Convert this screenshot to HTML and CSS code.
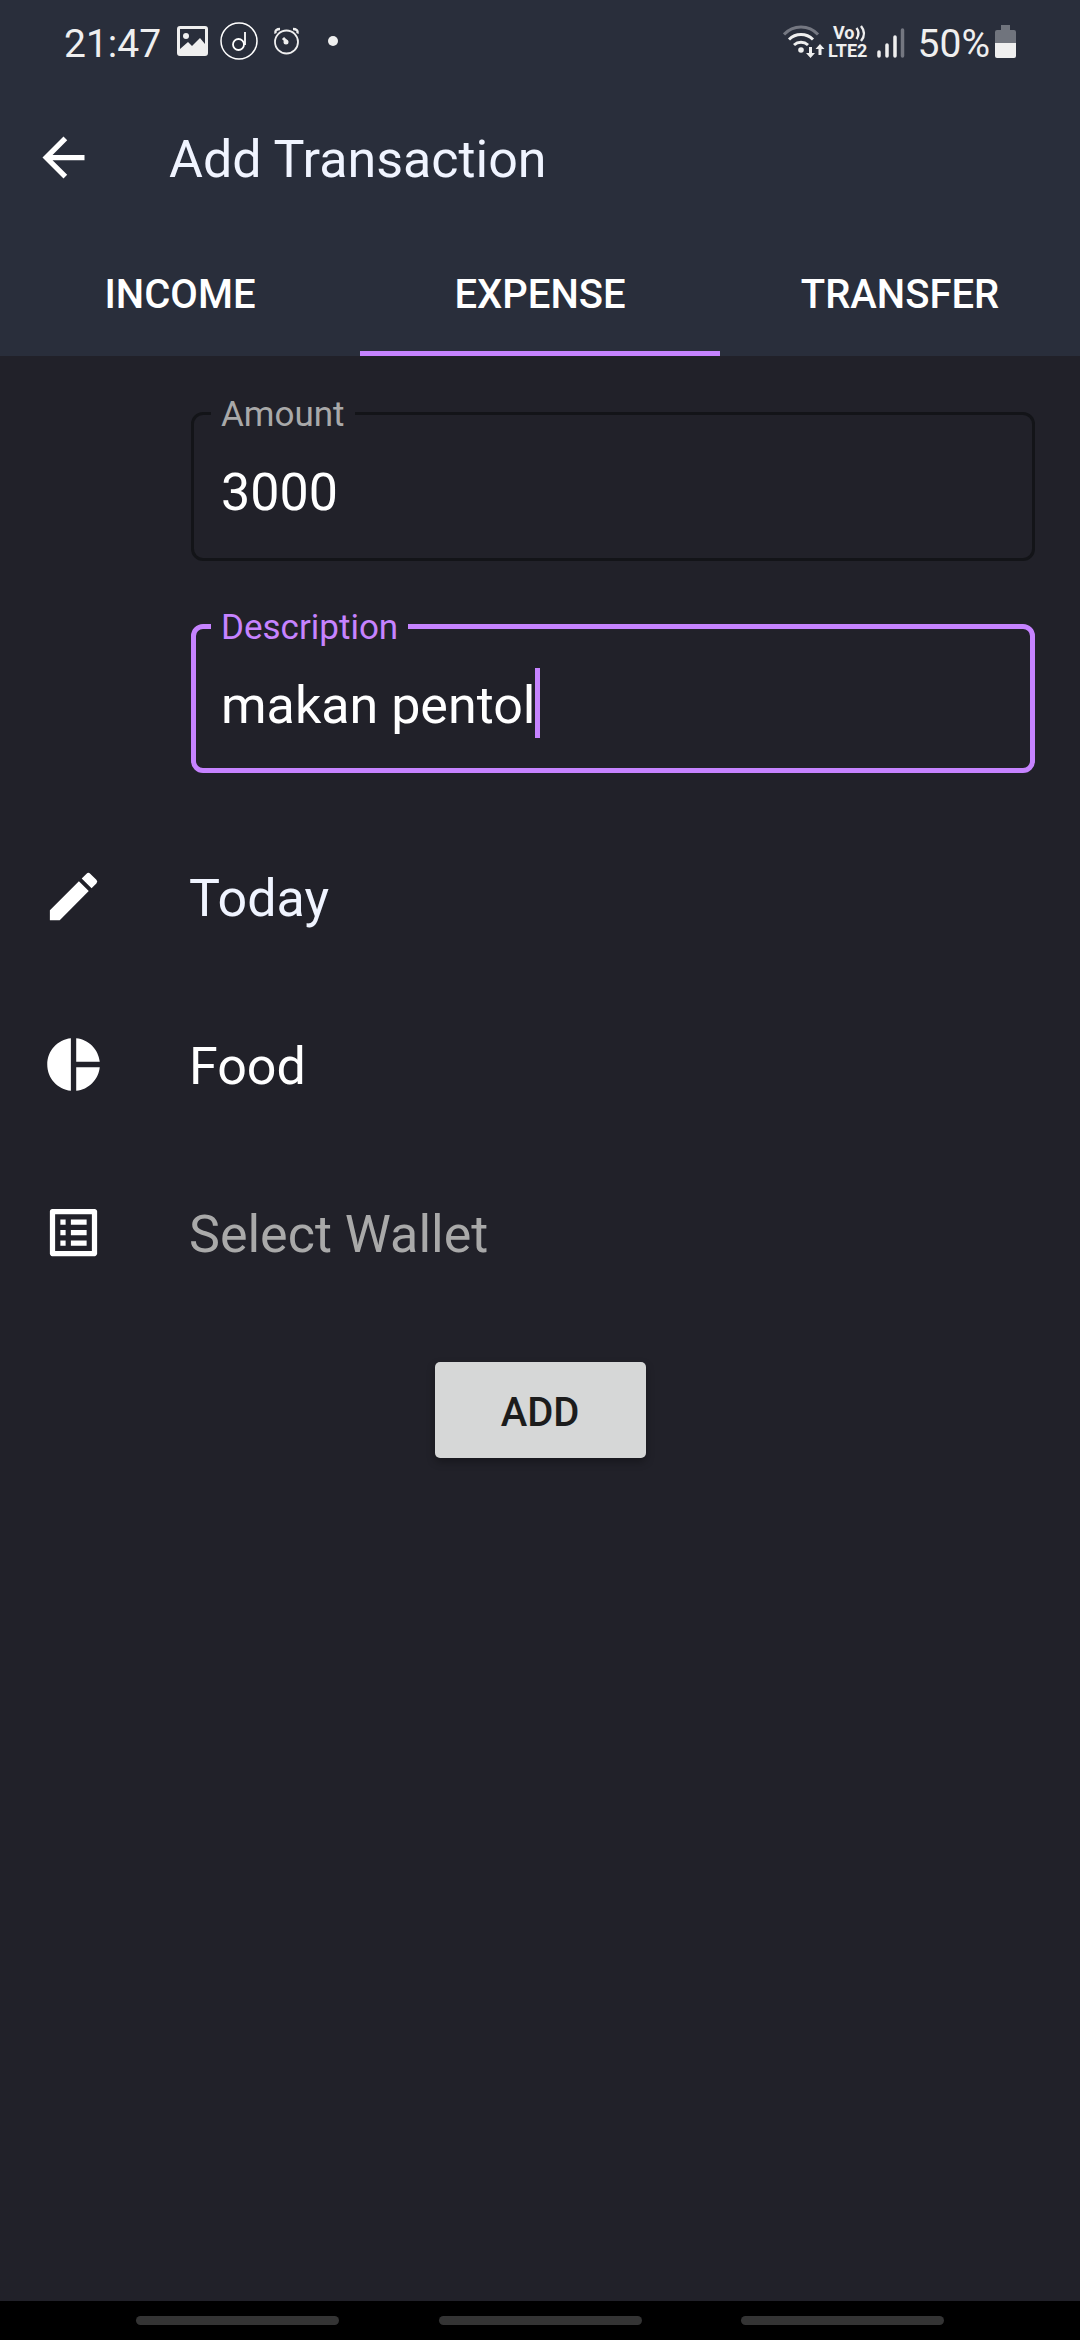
FILE: index.html
```html
<!DOCTYPE html>
<html lang="en">
<head>
<meta charset="utf-8">
<meta name="viewport" content="width=device-width, initial-scale=1">
<title>Add Transaction</title>
<link rel="stylesheet" href="styles.css">
</head>
<body>
<div class="screen">
  <header class="header">
    <div class="status-bar">
      <div class="status-group">
        <span class="status-text">21:47</span>
        <svg class="status-icons-left" width="164" height="42" viewBox="0 0 164 42" aria-hidden="true">
          <path fill="#efefef" fill-rule="evenodd" d="M3 5h25a3 3 0 0 1 3 3v24a3 3 0 0 1-3 3H3a3 3 0 0 1-3-3V8a3 3 0 0 1 3-3zM3 8v20l8-7 4 4 8-8 5 6V8z"/>
          <circle cx="9" cy="15" r="3" fill="#efefef"/>
          <g fill="none" stroke="#fff">
            <circle cx="62" cy="20" r="18" stroke-width="1.5"/>
            <circle cx="61.500" cy="23.500" r="5.500" stroke-width="1.8"/>
            <path d="M68 11v13" stroke-width="1.8"/>
          </g>
          <g fill="none" stroke="#efefef" stroke-width="1.800">
            <circle cx="109.500" cy="21" r="11.500"/>
            <path d="M98.500 12.500c-1-3 1.500-4.500 4.500-4.500M120.500 12.500c1-3-1.500-4.500-4.500-4.500" stroke-width="2.500"/>
            <path d="M106 17l3 3" stroke-width="3"/>
          </g>
          <circle cx="109" cy="21" r="2.500" fill="#efefef"/>
          <circle cx="156" cy="20" r="5" fill="#efefef"/>
        </svg>
      </div>
      <div class="status-group">
        <svg class="status-icons-right" width="122" height="42" viewBox="0 0 122 42" role="img" aria-label="Wi-Fi and mobile signal">
          <g fill="none" stroke-width="3">
            <path d="M1 13.500a23 23 0 0 1 34 0" stroke="#747781"/>
            <path d="M6 18.500a17 17 0 0 1 24 0M11 24a10.500 10.500 0 0 1 14 0" stroke="#efefef"/>
          </g>
          <circle cx="18" cy="29" r="2.800" fill="#efefef"/>
          <path fill="#efefef" d="M26 26h3v6h3l-4.500 5-4.500-5h3zM35.500 34h3v-6h3l-4.500-5-4.500 5h3z"/>
          <text class="network-label" x="50" y="18">Vo</text>
          <text class="network-label" x="45" y="36">LTE2</text>
          <path d="M73.500 7q4 5 0 11M78 5q6 7.500 0 15" fill="none" stroke="#efefef" stroke-width="2.400"/>
          <g stroke="#efefef" stroke-width="3.500" stroke-linecap="round">
            <path d="M96 31v4M104 24v11M112 16v19"/>
            <path d="M119.500 9v26" stroke="#747781"/>
          </g>
        </svg>
        <span class="status-text">50%</span>
        <svg class="battery" width="21" height="42" viewBox="0 0 21 42" aria-hidden="true">
          <path fill="#70747d" d="M6 4h9v5h4a2 2 0 0 1 2 2v12H0V11a2 2 0 0 1 2-2h4z"/>
          <path fill="#efefef" d="M0 22h21v13a2 2 0 0 1-2 2H2a2 2 0 0 1-2-2z"/>
        </svg>
      </div>
    </div>
    <div class="app-bar">
      <button class="back" type="button" aria-label="Back">
        <svg width="63" height="63" viewBox="0 0 24 24" aria-hidden="true"><path fill="#fff" d="M20 11H7.830l5.590-5.590L12 4l-8 8 8 8 1.410-1.410L7.830 13H20z"/></svg>
      </button>
      <h1 class="title">Add Transaction</h1>
    </div>
    <div class="tabs" role="tablist">
      <button class="tab" type="button" role="tab" aria-selected="false">INCOME</button>
      <button class="tab tab-active" type="button" role="tab" aria-selected="true">EXPENSE</button>
      <button class="tab" type="button" role="tab" aria-selected="false">TRANSFER</button>
    </div>
  </header>

  <main class="content">
    <form class="form">
      <div class="fields">
        <fieldset class="field">
          <legend class="field-legend"><label for="amount">Amount</label></legend>
          <div class="field-row">
            <input class="field-input" id="amount" type="text" inputmode="numeric" value="3000">
          </div>
        </fieldset>
        <fieldset class="field field-focused">
          <legend class="field-legend"><label for="description">Description</label></legend>
          <div class="field-row">
            <input class="field-input" id="description" type="text" value="makan pentol">
            <span class="caret"></span>
          </div>
        </fieldset>
      </div>
      <div class="options">
        <button class="option option-date" type="button">
          <svg width="63" height="63" viewBox="0 0 24 24" aria-hidden="true"><path fill="#fff" d="M3 17.250V21h3.750L17.810 9.940l-3.750-3.750L3 17.250zM20.710 7.040a1 1 0 0 0 0-1.410l-2.340-2.340a1 1 0 0 0-1.410 0l-1.830 1.830 3.750 3.750 1.830-1.830z"/></svg>
          <span class="option-text">Today</span>
        </button>
        <button class="option" type="button">
          <svg width="63" height="63" viewBox="0 0 24 24" aria-hidden="true"><path fill="#fff" d="M11 2v20c-5.070-.5-9-4.790-9-10s3.930-9.500 9-10zm2.030 0v8.990H22c-.47-4.740-4.240-8.520-8.970-8.990zm0 11.010V22c4.740-.47 8.500-4.250 8.970-8.990h-8.970z"/></svg>
          <span class="option-text">Food</span>
        </button>
        <button class="option option-empty" type="button">
          <svg width="63" height="63" viewBox="0 0 24 24" aria-hidden="true"><path fill="#fff" d="M19 5v14H5V5h14m1.100-2H3.900c-.5 0-.9.400-.9.900v16.200c0 .4.400.9.900.9h16.200c.4 0 .9-.5.900-.9V3.900c0-.5-.5-.9-.9-.9zM11 7h6v2h-6V7zm0 4h6v2h-6v-2zm0 4h6v2h-6v-2zM7 7h2v2H7V7zm0 4h2v2H7v-2zm0 4h2v2H7v-2z"/></svg>
          <span class="option-text">Select Wallet</span>
        </button>
      </div>
      <button class="add" type="button">ADD</button>
    </form>
  </main>

  <div class="nav-bar">
    <span class="nav-pill"></span>
    <span class="nav-pill"></span>
    <span class="nav-pill"></span>
  </div>
</div>
</body>
</html>
```
FILE: styles.css
```css
* {
  box-sizing: border-box;
}

body {
  margin: 0;
  background: #212129;
  color: #fff;
  font-family: Roboto, "Noto Sans", sans-serif;
}

button {
  margin: 0;
  padding: 0;
  border: 0;
  background: none;
  color: inherit;
  font-family: inherit;
}

svg {
  display: block;
  flex: none;
}

.screen {
  display: flex;
  flex-direction: column;
  min-height: 100vh;
}

.header {
  background: #292e3b;
}

.status-bar {
  display: flex;
  justify-content: space-between;
  align-items: center;
  height: 84px;
  padding: 0 64px;
}

.status-group {
  display: flex;
  align-items: center;
}

.status-text {
  padding-top: 3px;
  color: #efefef;
  font-size: 39px;
  line-height: 46px;
}

.status-icons-left {
  margin-left: 16px;
}

.status-icons-right {
  margin-right: 13px;
}

.battery {
  margin-left: 5px;
}

.network-label {
  fill: #efefef;
  font-size: 18px;
  font-weight: 700;
}

.app-bar {
  display: flex;
  align-items: center;
  gap: 74px;
  height: 147px;
  padding: 0 32px;
}

.title {
  margin: 0;
  padding-top: 4px;
  color: #f0f4ff;
  font-size: 52px;
  font-weight: 400;
  line-height: 62px;
}

.tabs {
  display: grid;
  grid-template-columns: repeat(3, 1fr);
}

.tab {
  height: 125px;
  padding-top: 8px;
  border-bottom: 5px solid transparent;
  font-size: 40px;
  font-weight: 500;
  line-height: 46px;
}

.tab-active {
  border-bottom-color: #c683ff;
}

.content {
  flex: 1;
}

.form {
  display: flex;
  flex-direction: column;
  padding: 35px 0;
}

.fields {
  display: flex;
  flex-direction: column;
  gap: 43px;
  padding: 0 45px 0 191px;
}

.field {
  min-width: 0;
  margin: 0;
  padding: 20px 27px 33px 17px;
  border: 3px solid #131418;
  border-radius: 12px;
}

.field-focused {
  padding: 20px 25px 30px 15px;
  border: 5px solid #c683ff;
}

.field-legend {
  padding: 4px 10px 0;
  color: #a9a9a9;
  font-size: 35px;
  line-height: 40px;
}

.field-focused .field-legend {
  color: #c683ff;
}

.field-row {
  display: flex;
  padding-left: 10px;
}

.field-input {
  field-sizing: content;
  height: 70px;
  padding: 4px 0 0;
  border: 0;
  outline: 0;
  background: none;
  color: #fff;
  caret-color: #c683ff;
  font-family: inherit;
  font-size: 52px;
  line-height: 62px;
}

.caret {
  width: 5px;
  background: #c683ff;
}

.options {
  display: flex;
  flex-direction: column;
  padding-top: 39px;
}

.option {
  display: flex;
  align-items: center;
  gap: 84px;
  height: 168px;
  padding: 0 42px;
  text-align: left;
}

.option-date {
  color: #f0f4ff;
}

.option-empty {
  color: #a9a9a9;
}

.option-text {
  padding-top: 5px;
  font-size: 52px;
  line-height: 62px;
}

.add {
  align-self: center;
  width: 211px;
  height: 96px;
  margin-top: 46px;
  padding-top: 5px;
  border-radius: 5px;
  background: #d6d7d7;
  box-shadow: 0 4px 8px rgba(0, 0, 0, 0.3);
  color: #1c1c1c;
  font-size: 40px;
  font-weight: 500;
  line-height: 46px;
}

.nav-bar {
  display: flex;
  justify-content: space-between;
  padding: 15px 136px;
  background: #000;
}

.nav-pill {
  width: 203px;
  height: 9px;
  border-radius: 5px;
  background: #343434;
}
```
